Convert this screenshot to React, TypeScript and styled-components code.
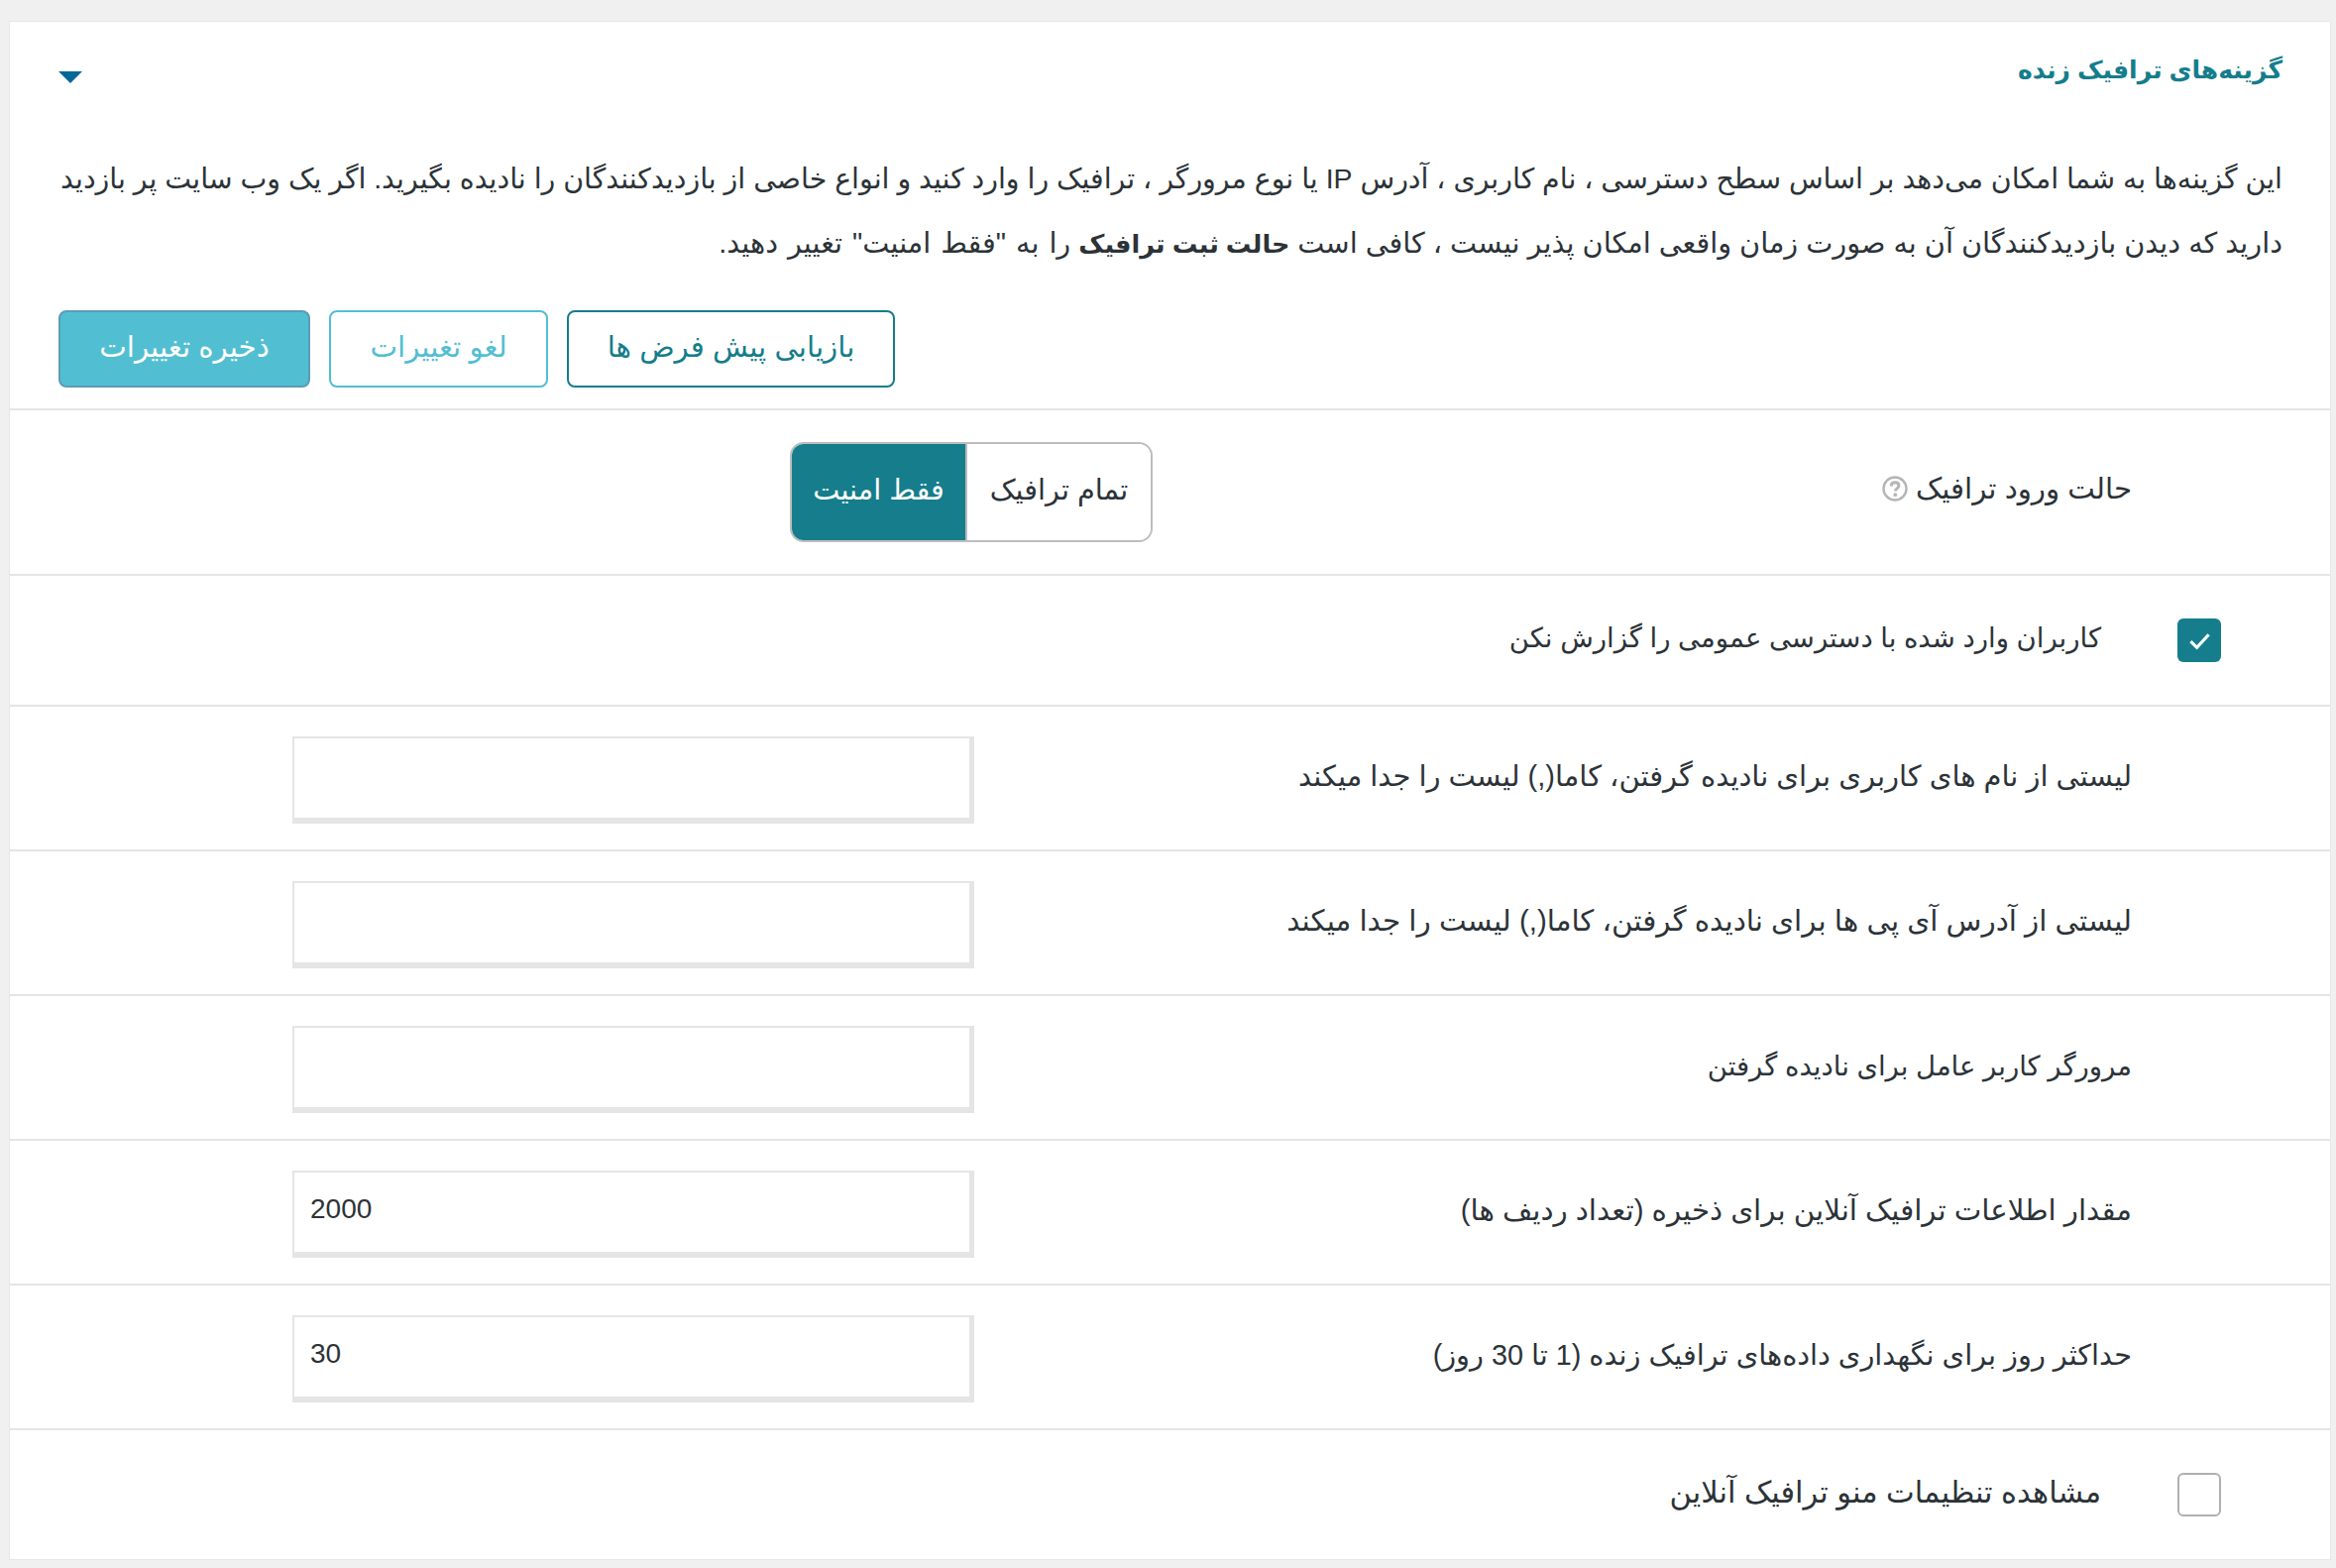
import styled, { createGlobalStyle } from 'styled-components';

const GlobalStyle = createGlobalStyle`
  html, body {
    margin: 0;
    padding: 0;
    background: #f0f0f1;
  }
  * {
    box-sizing: border-box;
  }
`;

const App = () => {
  return (
    <Page dir="rtl">
      <GlobalStyle />
      <Card>
        <Intro>
          <Header>
            <Title>گزینه‌های ترافیک زنده</Title>
            <Arrow />
          </Header>
          <Description>
            <DescriptionLine $size={28.45}>
              این گزینه‌ها به شما امکان می‌دهد بر اساس سطح دسترسی ، نام کاربری ، آدرس IP یا نوع مرورگر ، ترافیک را وارد کنید و
              انواع خاصی از بازدیدکنندگان را نادیده بگیرید. اگر یک وب سایت پر بازدید
            </DescriptionLine>
            <DescriptionLine $size={28.75}>
              دارید که دیدن بازدیدکنندگان آن به صورت زمان واقعی امکان پذیر نیست ، کافی است <b>حالت ثبت ترافیک</b>{' '}
              <DescriptionTail>را به "فقط امنیت" تغییر دهید.</DescriptionTail>
            </DescriptionLine>
          </Description>
          <Actions>
            <ActionButton $variant="reset">بازیابی پیش فرض ها</ActionButton>
            <ActionButton $variant="cancel">لغو تغییرات</ActionButton>
            <ActionButton $variant="save">ذخیره تغییرات</ActionButton>
          </Actions>
        </Intro>

        <SegmentRow>
          <ModeLabel>
            حالت ورود ترافیک
            <HelpIcon viewBox="0 0 26 26">
              <circle cx="13" cy="13" r="11.5" fill="#fff" stroke="#b5b5b5" strokeWidth="2.4" />
              <path d="M9.2 10.4c0-2.3 1.7-3.7 3.9-3.7s3.8 1.3 3.8 3.2c0 2.9-3.5 2.9-3.5 5.6" fill="none" stroke="#b5b5b5" strokeWidth="3" />
              <circle cx="13.3" cy="19.2" r="1.9" fill="#b5b5b5" />
            </HelpIcon>
          </ModeLabel>
          <Segment>
            <SegmentOption>تمام ترافیک</SegmentOption>
            <SegmentOption $active>فقط امنیت</SegmentOption>
          </Segment>
        </SegmentRow>

        <CheckRow>
          <CheckBox $checked>
            <CheckMark viewBox="0 0 22 18">
              <path d="M3 9.5l5.5 5.5L19 3.5" fill="none" stroke="#fff" strokeWidth="2.8" />
            </CheckMark>
          </CheckBox>
          <CheckLabel $size={27.5}>کاربران وارد شده با دسترسی عمومی را گزارش نکن</CheckLabel>
        </CheckRow>

        <InputRow>
          <InputLabel $size={29}>لیستی از نام های کاربری برای نادیده گرفتن، کاما(,) لیست را جدا میکند</InputLabel>
          <TextInput defaultValue="" />
        </InputRow>
        <InputRow>
          <InputLabel $size={29.4}>لیستی از آدرس آی پی ها برای نادیده گرفتن، کاما(,) لیست را جدا میکند</InputLabel>
          <TextInput defaultValue="" />
        </InputRow>
        <InputRow>
          <InputLabel $size={27.5}>مرورگر کاربر عامل برای نادیده گرفتن</InputLabel>
          <TextInput defaultValue="" />
        </InputRow>
        <InputRow>
          <InputLabel $size={29.3}>مقدار اطلاعات ترافیک آنلاین برای ذخیره (تعداد ردیف ها)</InputLabel>
          <TextInput defaultValue="2000" />
        </InputRow>
        <InputRow>
          <InputLabel $size={28.8}>حداکثر روز برای نگهداری داده‌های ترافیک زنده (1 تا 30 روز)</InputLabel>
          <TextInput defaultValue="30" />
        </InputRow>

        <CheckRow>
          <CheckBox />
          <CheckLabel $size={30.5}>مشاهده تنظیمات منو ترافیک آنلاین</CheckLabel>
        </CheckRow>
      </Card>
    </Page>
  );
};

const Page = styled.div`
  min-height: 100vh;
  padding: 22px 6px 8px 10px;
  background: #f0f0f1;
  font-family: 'Liberation Sans', 'DejaVu Sans', sans-serif;
  font-size: 29.3px;
  color: #2c3338;
`;
const Card = styled.div`
  background: #fff;
  box-shadow: 0 0 0 1px #e6e7e9;
`;
const Intro = styled.div`
  padding: 0 48px 21px 49px;
`;
const Header = styled.div`
  height: 96px;
  display: flex;
  justify-content: space-between;
  align-items: center;
`;
const Title = styled.h2`
  margin: 0;
  font-size: 25px;
  font-weight: 600;
  color: #157d8c;
`;
const Arrow = styled.span`
  width: 0;
  height: 0;
  margin-top: 16px;
  border-style: solid;
  border-width: 12px 12px 0 12px;
  border-color: #006799 transparent transparent transparent;
`;
const Description = styled.div`
  margin: 30px 0 35px;
  line-height: 65px;
  b {
    font-size: 25.5px;
    line-height: 0;
  }
`;
const DescriptionLine = styled.p<{ $size: number }>`
  margin: 0;
  height: 65px;
  white-space: nowrap;
  font-size: ${(p) => p.$size}px;
`;
const DescriptionTail = styled.span`
  word-spacing: 2px;
`;
const Actions = styled.div`
  display: flex;
  justify-content: flex-end;
  gap: 19px;
`;
const ActionButton = styled.button<{ $variant: 'reset' | 'cancel' | 'save' }>`
  height: 78px;
  padding: 0 0 4px;
  border-radius: 8px;
  border: 2px solid ${(p) => (p.$variant === 'reset' ? '#157d8c' : p.$variant === 'cancel' ? '#52bed2' : '#5a9db5')};
  width: ${(p) => (p.$variant === 'reset' ? 331 : p.$variant === 'cancel' ? 221 : 254)}px;
  background: ${(p) => (p.$variant === 'save' ? '#52bed2' : '#fff')};
  color: ${(p) => (p.$variant === 'reset' ? '#157d8c' : p.$variant === 'cancel' ? '#52bed2' : '#fff')};
  font-family: inherit;
  font-size: 29.3px;
`;
const SegmentRow = styled.div`
  display: flex;
  align-items: center;
  padding: 32px 200px 32px 0;
  border-top: 2px solid #e5e5e5;
`;
const ModeLabel = styled.div`
  flex: 0 0 988px;
  display: flex;
  align-items: center;
  gap: 8px;
  padding-bottom: 8px;
`;
const HelpIcon = styled.svg`
  width: 26px;
  height: 26px;
`;
const Segment = styled.div`
  display: flex;
  width: 366px;
  height: 101px;
  border: 2px solid #bdbdbd;
  border-radius: 14px;
  overflow: hidden;
`;
const SegmentOption = styled.div<{ $active?: boolean }>`
  flex: ${(p) => (p.$active ? '0 0 177px' : '1')};
  display: flex;
  align-items: center;
  justify-content: center;
  padding-bottom: 6px;
  font-size: 28.8px;
  background: ${(p) => (p.$active ? '#157d8c' : '#fff')};
  color: ${(p) => (p.$active ? '#fff' : '#2c3338')};
  border-right: ${(p) => (p.$active ? '2px solid #bdbdbd' : '0')};
`;
const CheckRow = styled.div`
  display: flex;
  align-items: center;
  gap: 77px;
  padding: 43px 110px 43px 0;
  border-top: 2px solid #e5e5e5;
`;
const CheckBox = styled.span<{ $checked?: boolean }>`
  flex: 0 0 44px;
  height: 44px;
  display: flex;
  align-items: center;
  justify-content: center;
  border-radius: 6px;
  background: ${(p) => (p.$checked ? '#157d8c' : '#fff')};
  border: ${(p) => (p.$checked ? '0' : '2px solid #b0b0b0')};
`;
const CheckMark = styled.svg`
  width: 25px;
  height: 21px;
`;
const CheckLabel = styled.span<{ $size: number }>`
  padding-bottom: 6px;
  font-size: ${(p) => p.$size}px;
  color: #2c3338;
`;
const InputRow = styled.div`
  display: flex;
  align-items: center;
  padding: 30px 200px 26px 0;
  border-top: 2px solid #e5e5e5;
`;
const InputLabel = styled.div<{ $size: number }>`
  flex: 0 0 1168px;
  padding-bottom: 8px;
  font-size: ${(p) => p.$size}px;
`;
const TextInput = styled.input`
  width: 688px;
  height: 88px;
  padding: 0 16px 6px;
  direction: ltr;
  text-align: left;
  font-family: inherit;
  font-size: 28px;
  color: #2c3338;
  background: #fff;
  border-style: solid;
  border-color: #e5e5e5;
  border-width: 2px 5px 6px 2px;
  outline: none;
`;

export default App;
